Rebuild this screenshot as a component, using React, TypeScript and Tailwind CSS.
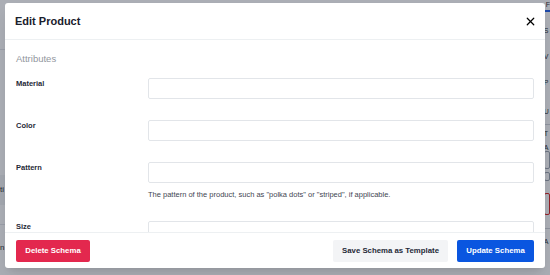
import { X } from 'lucide-react'

const font = { fontFamily: '"Liberation Sans", Arial, sans-serif' }

const fields = [
  { label: 'Material' },
  { label: 'Color' },
  { label: 'Pattern', help: 'The pattern of the product, such as "polka dots" or "striped", if applicable.' },
  { label: 'Size' },
]

function BackgroundPage() {
  return (
    <div className="flex h-[275px] w-[550px] bg-white text-[8px] text-[#333]">
      <div className="flex w-[546px] flex-col">
        <div className="h-[50px] border-b border-[#e5e7eb]" />
        <div className="h-[125px]" />
        <div className="flex h-[30px] items-center bg-[#f3f4f6]">ti</div>
        <div className="h-[20px] border-b border-[#e5e7eb]" />
        <div className="flex h-[45px] items-center">n</div>
      </div>
      <div className="flex flex-1 flex-col text-[7px]">
        <div className="h-[10px] pl-[2px]">F</div>
        <div className="h-[2px] bg-[#2563eb]" />
        <div className="h-[14px]" />
        <div className="h-[26px]">S</div>
        <div className="h-[26px]">V</div>
        <div className="h-[29px]">P</div>
        <div className="h-[18px] border-b border-[#d1d5db]">U</div>
        <div className="h-[18px] pt-[4px]">T</div>
        <div className="h-[8px]">A</div>
        <div className="h-[18px] rounded-[2px] border border-[#9ca3af]" />
        <div className="mt-[3px] h-[9px] rounded-[2px] border border-[#9ca3af]" />
        <div className="mt-[12px] h-[22px] rounded-[2px] border border-[#dc2626]" />
        <div className="h-[14px] border-b border-[#d1d5db]" />
        <div className="pt-[8px]">A</div>
      </div>
    </div>
  )
}

export default function App() {
  return (
    <div className="relative h-[275px] w-[550px] overflow-hidden" style={font}>
      <BackgroundPage />
      <div className="absolute inset-0 bg-[rgba(15,23,42,0.35)]" />
      <div className="absolute left-[5px] top-[3px] flex h-[265px] w-[540px] flex-col overflow-hidden rounded-[3px] bg-white shadow-lg">
        <div className="flex h-[37px] shrink-0 items-center justify-between border-b border-[#edf0f2] pl-[10px] pr-[8px]">
          <h2 className="text-[11px] font-bold text-[#1a202c]">Edit Product</h2>
          <X size={13} strokeWidth={2.2} className="text-black" />
        </div>

        <div className="flex-1 overflow-hidden px-[11px] pt-[13px]">
          <div className="text-[9.5px] leading-[12px] text-[#92969e]">Attributes</div>
          <div className="mt-[13px] grid grid-cols-[132px_1fr] gap-y-[21px]">
            {fields.map((f) => (
              <div key={f.label} className="contents">
                <div className="pt-[1px] text-[7.5px] font-bold leading-[10px] text-[#1f2937]">{f.label}</div>
                <div className="flex flex-col">
                  <input className="h-[21px] w-full rounded-[2px] border border-[#e2e5e9] bg-white outline-none" />
                  {f.help && (
                    <p className="mt-[7px] text-[7.5px] leading-[10px] text-[#3f4652]">{f.help}</p>
                  )}
                </div>
              </div>
            ))}
          </div>
        </div>

        <div className="flex h-[36px] shrink-0 items-center justify-between border-t border-[#edf0f2] px-[11px]">
          <button className="h-[22px] w-[74px] rounded-[2px] bg-[#e3284e] text-[7.8px] font-bold text-white">
            Delete Schema
          </button>
          <div className="flex gap-[9px]">
            <button className="h-[22px] w-[115px] rounded-[2px] bg-[#f3f4f6] text-[7.8px] font-bold text-[#1f2937]">
              Save Schema as Template
            </button>
            <button className="h-[22px] w-[77px] rounded-[2px] bg-[#0a56e0] text-[7.8px] font-bold text-white">
              Update Schema
            </button>
          </div>
        </div>
      </div>
    </div>
  )
}
